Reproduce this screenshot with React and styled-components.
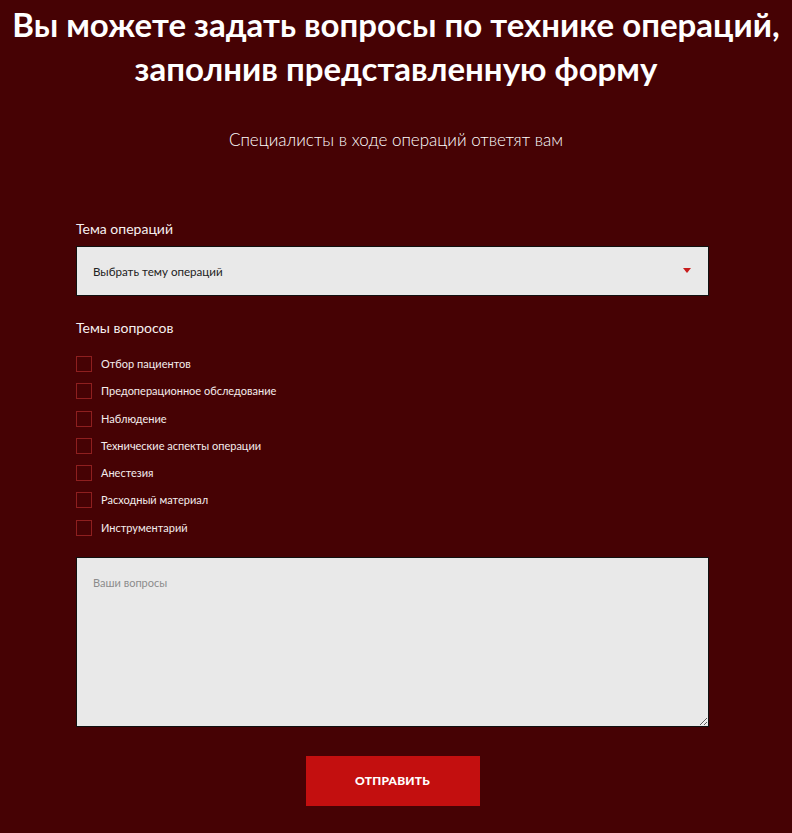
import React from 'react'
import styled, { createGlobalStyle } from 'styled-components'

const GlobalStyle = createGlobalStyle`
  html, body {
    margin: 0;
    padding: 0;
    background: #460204;
  }
  * { box-sizing: border-box; }
`;

const Page = styled.div`
  min-height: 833px;
  background: #460204;
  font-family: Lato, "Liberation Sans", sans-serif;
  color: #fff;
  padding-top: 2px;
`;

const Title = styled.h1`
  margin: 0;
  text-align: center;
  font-size: 33px;
  line-height: 44px;
  font-weight: 700;
  color: #fff;
`;

const Subtitle = styled.p`
  margin: 39px 0 0;
  text-align: center;
  font-size: 17px;
  line-height: 22px;
  font-weight: 300;
  color: #fff;
`;

const Form = styled.form`
  width: 633px;
  margin: 69px 0 0 76px;
  display: flex;
  flex-direction: column;
`;

const Label = styled.div`
  font-size: 14px;
  line-height: 18px;
  font-weight: 400;
  color: #f6f0f0;
  margin-bottom: ${p => p.$gap || 8}px;
`;

const SelectBox = styled.div`
  position: relative;
  height: 50px;
  background: #e9e9e9;
  border: 1px solid #111;
  display: flex;
  align-items: center;
  padding-left: 16px;
  font-size: 11.6px;
  color: #222;
  margin-bottom: 23px;
`;

const Arrow = styled.span`
  position: absolute;
  right: 17px;
  top: 21px;
  width: 0;
  height: 0;
  border-left: 4px solid transparent;
  border-right: 4px solid transparent;
  border-top: 5px solid #c81c1c;
`;

const CheckList = styled.div`
  display: flex;
  flex-direction: column;
  gap: 11.3px;
  margin-bottom: 21px;
`;

const CheckRow = styled.label`
  display: flex;
  align-items: center;
  gap: 9px;
  height: 16px;
  font-size: 11px;
  line-height: 16px;
  color: #f4eded;
`;

const Box = styled.span`
  width: 16px;
  height: 16px;
  border: 1px solid #8e1f1f;
  flex-shrink: 0;
`;

const TextArea = styled.textarea`
  height: 170px;
  background: #e9e9e9;
  border: 1px solid #111;
  padding: 18px 16px;
  font-family: Lato, "Liberation Sans", sans-serif;
  font-size: 11px;
  color: #222;
  resize: vertical;
  outline: none;
  &::placeholder { color: #8c8c8c; }
`;

const Submit = styled.button`
  align-self: center;
  margin-top: 29px;
  width: 174px;
  height: 50px;
  border: none;
  background: #c30f0f;
  color: #fff;
  font-family: Lato, "Liberation Sans", sans-serif;
  font-weight: 900;
  font-size: 12px;
  letter-spacing: 0.2px;
  text-transform: uppercase;
`;

const topics = [
  'Отбор пациентов',
  'Предоперационное обследование',
  'Наблюдение',
  'Технические аспекты операции',
  'Анестезия',
  'Расходный материал',
  'Инструментарий',
]

function App() {
  return (
    <Page>
      <GlobalStyle />
      <Title>
        Вы можете задать вопросы по технике операций,<br />
        заполнив представленную форму
      </Title>
      <Subtitle>Специалисты в ходе операций ответят вам</Subtitle>
      <Form onSubmit={e => e.preventDefault()}>
        <Label $gap={8}>Тема операций</Label>
        <SelectBox>
          Выбрать тему операций
          <Arrow />
        </SelectBox>
        <Label $gap={19}>Темы вопросов</Label>
        <CheckList>
          {topics.map(t => (
            <CheckRow key={t}>
              <Box />
              {t}
            </CheckRow>
          ))}
        </CheckList>
        <TextArea placeholder="Ваши вопросы" />
        <Submit type="submit">Отправить</Submit>
      </Form>
    </Page>
  )
}

export default App
